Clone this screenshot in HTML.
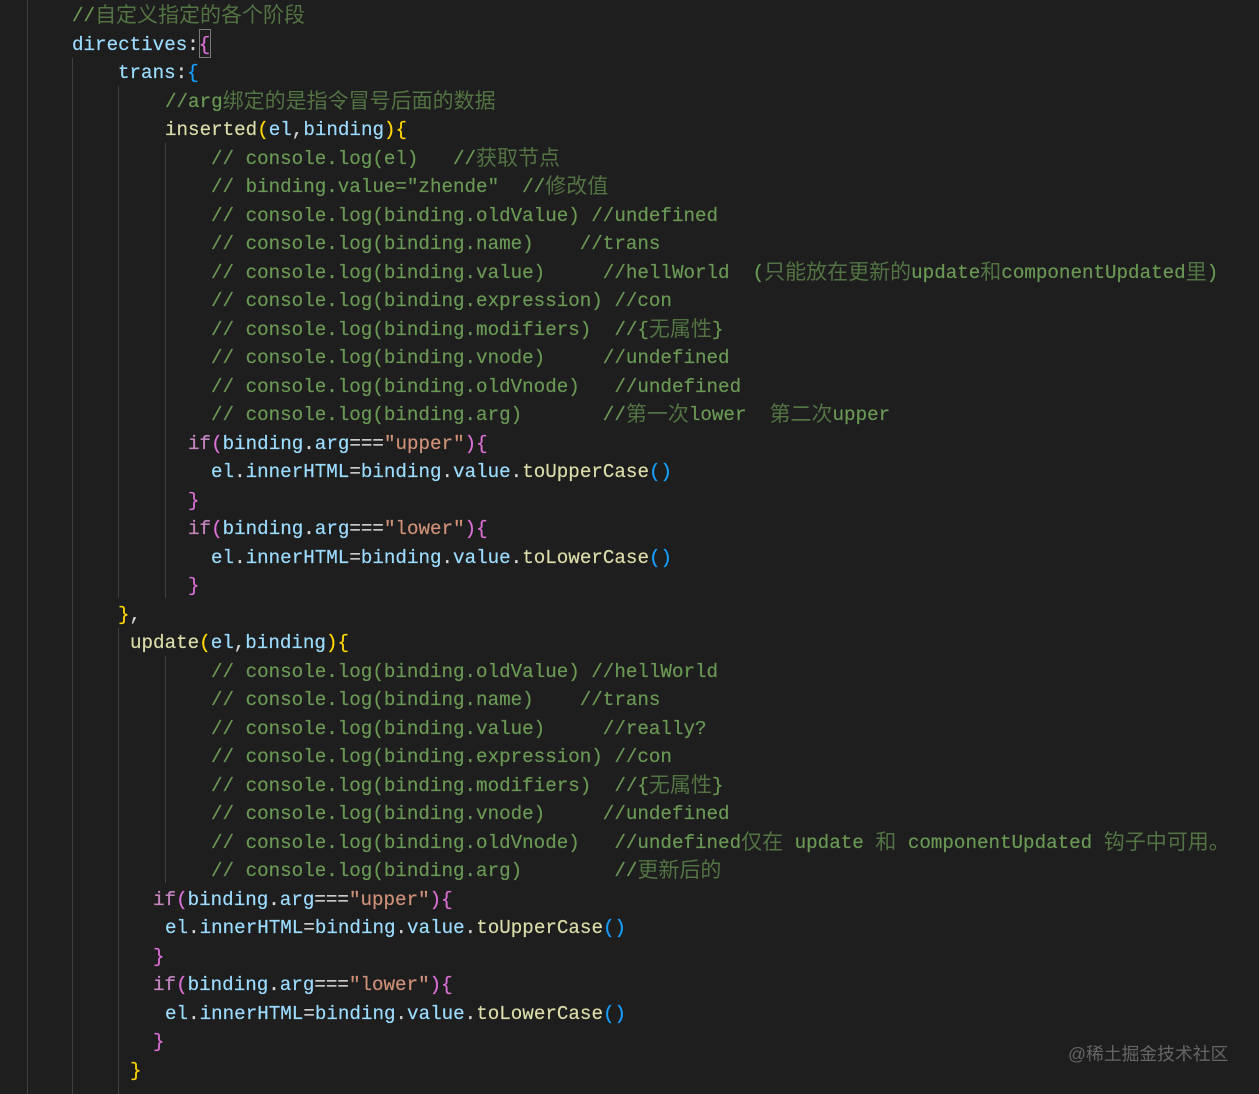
<!DOCTYPE html>
<html><head><meta charset="utf-8"><style>
html,body{margin:0;padding:0;width:1259px;height:1094px;overflow:hidden;background:#1e1e1e}
#code{position:absolute;left:0;top:2px;width:1259px;font:19.22px/28.5px "Liberation Mono","Noto Sans CJK SC",monospace;color:#d4d4d4;-webkit-text-stroke:.2px;filter:blur(.25px)}
#code div{height:28.5px;white-space:pre}
.c{color:#6a9955}.v{color:#9cdcfe}.f{color:#dcdcaa}.k{color:#c586c0}.s{color:#ce9178}.g{color:#ffd700}.p{color:#da70d6}.b{color:#179fff}
.z{font:21px/0 "Noto Sans CJK SC",sans-serif;color:#527343;-webkit-text-stroke:0;position:relative;top:1px}
.l{position:absolute;width:1px;background:#404040}
#box{position:absolute;left:199px;top:29px;width:10px;height:27px;border:1px solid #7a7a7a}
#wm{position:absolute;left:1068px;top:1041px;font:17.8px/26px "Liberation Sans","Noto Sans CJK SC",sans-serif;color:#666;white-space:nowrap}
</style></head><body>
<div class="l" style="left:27px;top:0;height:1094px"></div>
<div class="l" style="left:72px;top:58px;height:1036px"></div>
<div class="l" style="left:118px;top:86px;height:512px"></div>
<div class="l" style="left:118px;top:628px;height:466px"></div>
<div class="l" style="left:165px;top:143px;height:455px"></div>
<div class="l" style="left:165px;top:656px;height:227px"></div>
<div id="box"></div>
<div id="code">
<div style="padding-left:72px" class="c">//<span class="z">自定义指定的各个阶段</span></div>
<div style="padding-left:72px"><span class="v">directives</span>:<span class="p">{</span></div>
<div style="padding-left:118px"><span class="v">trans</span>:<span class="b">{</span></div>
<div style="padding-left:165px" class="c">//arg<span class="z">绑定的是指令冒号后面的数据</span></div>
<div style="padding-left:165px"><span class="f">inserted</span><span class="g">(</span><span class="v">el</span>,<span class="v">binding</span><span class="g">){</span></div>
<div style="padding-left:211px" class="c">// console.log(el)   //<span class="z">获取节点</span></div>
<div style="padding-left:211px" class="c">// binding.value="zhende"  //<span class="z">修改值</span></div>
<div style="padding-left:211px" class="c">// console.log(binding.oldValue) //undefined</div>
<div style="padding-left:211px" class="c">// console.log(binding.name)    //trans</div>
<div style="padding-left:211px" class="c">// console.log(binding.value)     //hellWorld  (<span class="z">只能放在更新的</span>update<span class="z">和</span>componentUpdated<span class="z">里</span>)</div>
<div style="padding-left:211px" class="c">// console.log(binding.expression) //con</div>
<div style="padding-left:211px" class="c">// console.log(binding.modifiers)  //{<span class="z">无属性</span>}</div>
<div style="padding-left:211px" class="c">// console.log(binding.vnode)     //undefined</div>
<div style="padding-left:211px" class="c">// console.log(binding.oldVnode)   //undefined</div>
<div style="padding-left:211px" class="c">// console.log(binding.arg)       //<span class="z">第一次</span>lower  <span class="z">第二次</span>upper</div>
<div style="padding-left:188px"><span class="k">if</span><span class="p">(</span><span class="v">binding</span>.<span class="v">arg</span>===<span class="s">"upper"</span><span class="p">){</span></div>
<div style="padding-left:211px"><span class="v">el</span>.<span class="v">innerHTML</span>=<span class="v">binding</span>.<span class="v">value</span>.<span class="f">toUpperCase</span><span class="b">()</span></div>
<div style="padding-left:188px"><span class="p">}</span></div>
<div style="padding-left:188px"><span class="k">if</span><span class="p">(</span><span class="v">binding</span>.<span class="v">arg</span>===<span class="s">"lower"</span><span class="p">){</span></div>
<div style="padding-left:211px"><span class="v">el</span>.<span class="v">innerHTML</span>=<span class="v">binding</span>.<span class="v">value</span>.<span class="f">toLowerCase</span><span class="b">()</span></div>
<div style="padding-left:188px"><span class="p">}</span></div>
<div style="padding-left:118px"><span class="g">}</span>,</div>
<div style="padding-left:130px"><span class="f">update</span><span class="g">(</span><span class="v">el</span>,<span class="v">binding</span><span class="g">){</span></div>
<div style="padding-left:211px" class="c">// console.log(binding.oldValue) //hellWorld</div>
<div style="padding-left:211px" class="c">// console.log(binding.name)    //trans</div>
<div style="padding-left:211px" class="c">// console.log(binding.value)     //really?</div>
<div style="padding-left:211px" class="c">// console.log(binding.expression) //con</div>
<div style="padding-left:211px" class="c">// console.log(binding.modifiers)  //{<span class="z">无属性</span>}</div>
<div style="padding-left:211px" class="c">// console.log(binding.vnode)     //undefined</div>
<div style="padding-left:211px" class="c">// console.log(binding.oldVnode)   //undefined<span class="z">仅在</span> update <span class="z">和</span> componentUpdated <span class="z">钩子中可用。</span></div>
<div style="padding-left:211px" class="c">// console.log(binding.arg)        //<span class="z">更新后的</span></div>
<div style="padding-left:153px"><span class="k">if</span><span class="p">(</span><span class="v">binding</span>.<span class="v">arg</span>===<span class="s">"upper"</span><span class="p">){</span></div>
<div style="padding-left:165px"><span class="v">el</span>.<span class="v">innerHTML</span>=<span class="v">binding</span>.<span class="v">value</span>.<span class="f">toUpperCase</span><span class="b">()</span></div>
<div style="padding-left:153px"><span class="p">}</span></div>
<div style="padding-left:153px"><span class="k">if</span><span class="p">(</span><span class="v">binding</span>.<span class="v">arg</span>===<span class="s">"lower"</span><span class="p">){</span></div>
<div style="padding-left:165px"><span class="v">el</span>.<span class="v">innerHTML</span>=<span class="v">binding</span>.<span class="v">value</span>.<span class="f">toLowerCase</span><span class="b">()</span></div>
<div style="padding-left:153px"><span class="p">}</span></div>
<div style="padding-left:130px"><span class="g">}</span></div>
</div>
<div id="wm">@稀土掘金技术社区</div>
</body></html>
